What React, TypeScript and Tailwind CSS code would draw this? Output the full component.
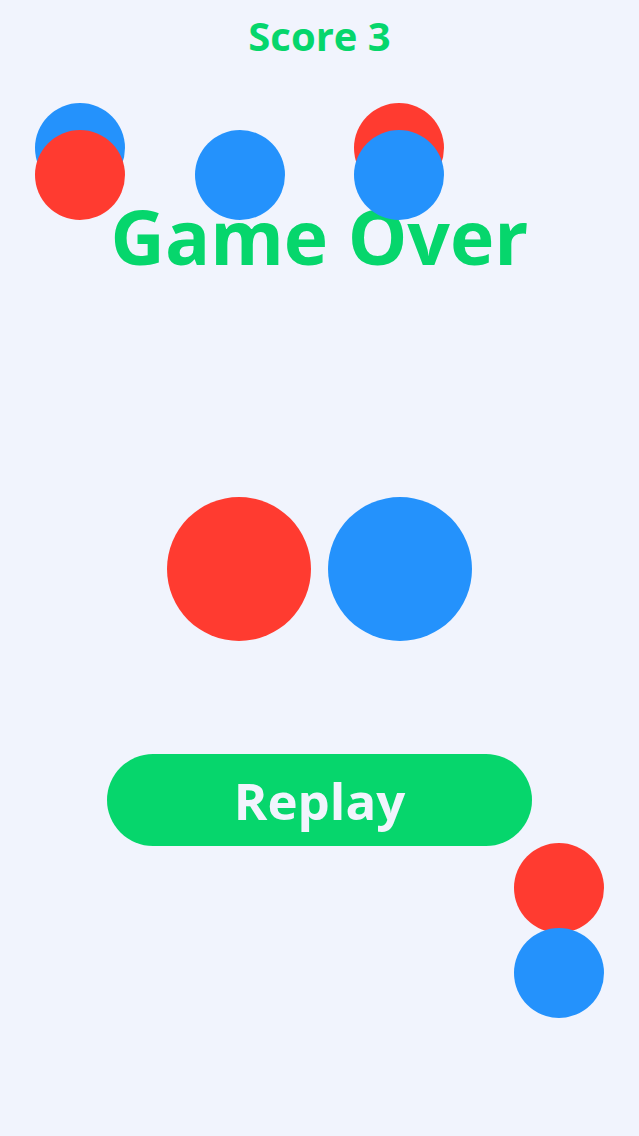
import React from "react";

type Dot = { x: number; y: number; color: "red" | "blue" };

// Pieces left on the board when the round ended (centre coordinates, 90px discs)
const pieces: Dot[] = [
  { x: 80, y: 148, color: "blue" },
  { x: 80, y: 175, color: "red" },
  { x: 240, y: 175, color: "blue" },
  { x: 399, y: 148, color: "red" },
  { x: 399, y: 175, color: "blue" },
  { x: 559, y: 888, color: "red" },
  { x: 559, y: 973, color: "blue" },
];

function Piece({ dot }: { dot: Dot }) {
  return (
    <div
      className={`absolute h-[90px] w-[90px] rounded-full ${
        dot.color === "red" ? "bg-[#ff3b30]" : "bg-[#2492fc]"
      }`}
      style={{ left: dot.x - 45, top: dot.y - 45 }}
    />
  );
}

export default function App() {
  return (
    <div
      className="relative h-[1136px] w-full overflow-hidden bg-[#f1f4fd]"
      style={{ fontFamily: '"Open Sans", "Noto Sans", sans-serif' }}
    >
      <div className="flex flex-col items-center">
        <div className="mt-[14px] text-[40px] font-bold leading-[44px] text-[#06d66c]">
          Score 3
        </div>
        <div className="mt-[138px] text-[75px] font-bold leading-[80px] text-[#06d66c]">
          Game Over
        </div>
        <div className="mt-[221px] flex gap-[17px]">
          <div className="h-[144px] w-[144px] rounded-full bg-[#ff3b30]" />
          <div className="h-[144px] w-[144px] rounded-full bg-[#2492fc]" />
        </div>
        <button className="mt-[113px] flex h-[92px] w-[425px] items-center justify-center rounded-full bg-[#06d66c] text-[51px] font-bold leading-none text-[#f1f4fd]">
          Replay
        </button>
      </div>
      {pieces.map((d, i) => (
        <Piece key={i} dot={d} />
      ))}
    </div>
  );
}
